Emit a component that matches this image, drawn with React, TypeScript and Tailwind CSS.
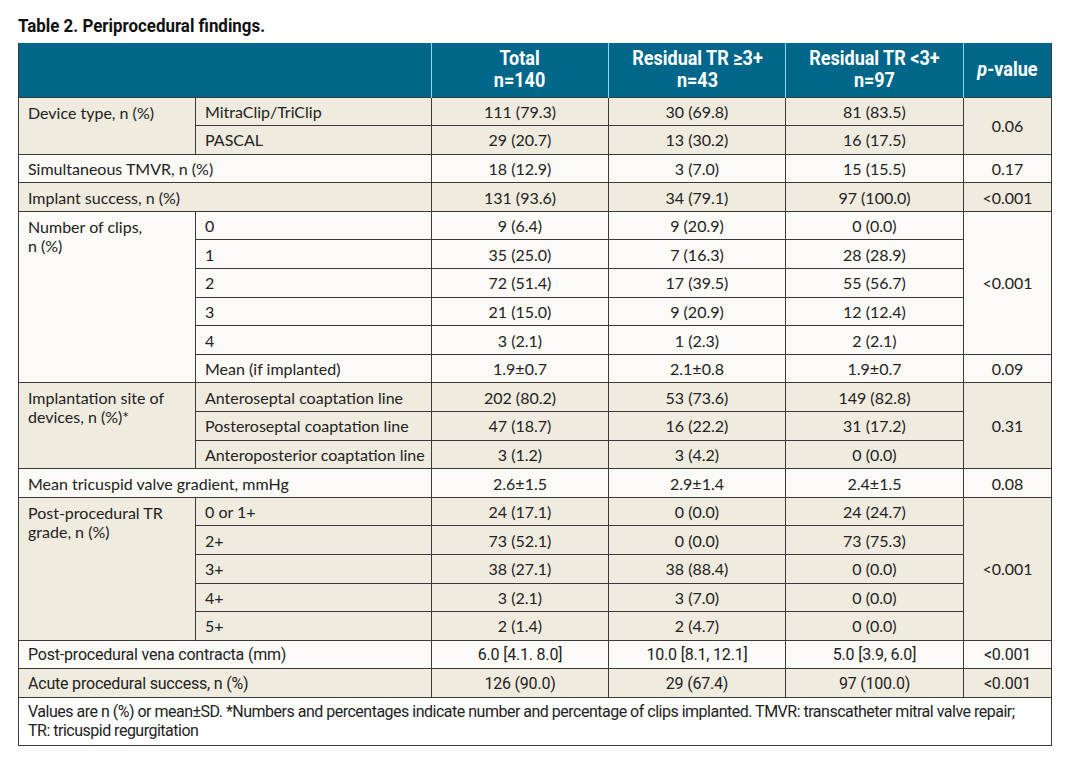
import React from "react"

const beige = "bg-[#f0ebdf]"
const white = "bg-[#fbfaf6]"
const cell =
  "border border-[#3a3a3a] px-[9px] h-[28.6px] text-[16px] leading-[19px] text-[#222] whitespace-nowrap font-['Lato',sans-serif]"
const num = cell + " text-center"
const narrow =
  "border border-[#3a3a3a] px-[9px] h-[28.6px] text-[16px] leading-[19px] text-[#222] whitespace-nowrap font-['Roboto',sans-serif] tracking-[-0.2px]"

type Row = { sub?: string; v: [string, string, string]; p?: string; pSpan?: number }

function Group({ label, rows, bg, span2 }: { label: React.ReactNode; rows: Row[]; bg: string; span2?: boolean }) {
  return (
    <>
      {rows.map((r, i) => (
        <tr key={i} className={bg}>
          {i === 0 && (
            <td
              className={cell + (span2 ? "" : " align-top pt-[5px] whitespace-normal")}
              rowSpan={span2 ? 1 : rows.length}
              colSpan={span2 ? 2 : 1}
            >
              {label}
            </td>
          )}
          {!span2 && <td className={cell}>{r.sub}</td>}
          {r.v.map((v, j) => (
            <td key={j} className={num}>
              {v}
            </td>
          ))}
          {r.p !== undefined && (
            <td className={num} rowSpan={r.pSpan ?? 1}>
              {r.p}
            </td>
          )}
        </tr>
      ))}
    </>
  )
}

function HeadText({ children }: { children: React.ReactNode }) {
  return (
    <span className="inline-block scale-x-[0.9] whitespace-nowrap font-['Roboto',sans-serif] font-bold text-[20px] leading-[22px]">
      {children}
    </span>
  )
}

export default function App() {
  return (
    <div className="w-[1069px] h-[760px] bg-white pl-[18px] pt-[14px]">
      <h1 className="mb-[7px] h-[22px]">
        <span className="inline-block origin-left scale-x-[0.89] whitespace-nowrap font-['Roboto',sans-serif] text-[19px] font-bold leading-[22px] text-[#111]">
          Table 2. Periprocedural findings.
        </span>
      </h1>
      <table className="border-collapse table-fixed w-[1033px]">
        <colgroup>
          <col className="w-[177px]" />
          <col className="w-[236px]" />
          <col className="w-[177px]" />
          <col className="w-[177px]" />
          <col className="w-[178px]" />
          <col className="w-[88px]" />
        </colgroup>
        <thead>
          <tr className="bg-[#01678a] text-white h-[54px]">
            <th colSpan={2} className="border-l border-l-[#3a3a3a] border-r border-r-[#8fd6ee]"></th>
            {[
              ["Total", "n=140"],
              ["Residual TR ≥3+", "n=43"],
              ["Residual TR <3+", "n=97"],
            ].map(([a, b]) => (
              <th key={a} className="border-r border-r-[#8fd6ee] text-center align-middle">
                <HeadText>
                  {a}
                  <br />
                  {b}
                </HeadText>
              </th>
            ))}
            <th className="border-r border-r-[#3a3a3a] text-center">
              <HeadText>
                <i>p</i>-value
              </HeadText>
            </th>
          </tr>
        </thead>
        <tbody>
          <Group
            label="Device type, n (%)"
            bg={beige}
            rows={[
              { sub: "MitraClip/TriClip", v: ["111 (79.3)", "30 (69.8)", "81 (83.5)"], p: "0.06", pSpan: 2 },
              { sub: "PASCAL", v: ["29 (20.7)", "13 (30.2)", "16 (17.5)"] },
            ]}
          />
          <Group
            label="Simultaneous TMVR, n (%)"
            bg={white}
            span2
            rows={[{ v: ["18 (12.9)", "3 (7.0)", "15 (15.5)"], p: "0.17" }]}
          />
          <Group
            label="Implant success, n (%)"
            bg={beige}
            span2
            rows={[{ v: ["131 (93.6)", "34 (79.1)", "97 (100.0)"], p: "<0.001" }]}
          />
          <Group
            label={
              <>
                Number of clips,
                <br />n (%)
              </>
            }
            bg={white}
            rows={[
              { sub: "0", v: ["9 (6.4)", "9 (20.9)", "0 (0.0)"], p: "<0.001", pSpan: 5 },
              { sub: "1", v: ["35 (25.0)", "7 (16.3)", "28 (28.9)"] },
              { sub: "2", v: ["72 (51.4)", "17 (39.5)", "55 (56.7)"] },
              { sub: "3", v: ["21 (15.0)", "9 (20.9)", "12 (12.4)"] },
              { sub: "4", v: ["3 (2.1)", "1 (2.3)", "2 (2.1)"] },
              { sub: "Mean (if implanted)", v: ["1.9±0.7", "2.1±0.8", "1.9±0.7"], p: "0.09" },
            ]}
          />
          <Group
            label={
              <>
                Implantation site of
                <br />
                devices, n (%)*
              </>
            }
            bg={beige}
            rows={[
              { sub: "Anteroseptal coaptation line", v: ["202 (80.2)", "53 (73.6)", "149 (82.8)"], p: "0.31", pSpan: 3 },
              { sub: "Posteroseptal coaptation line", v: ["47 (18.7)", "16 (22.2)", "31 (17.2)"] },
              { sub: "Anteroposterior coaptation line", v: ["3 (1.2)", "3 (4.2)", "0 (0.0)"] },
            ]}
          />
          <Group
            label="Mean tricuspid valve gradient, mmHg"
            bg={white}
            span2
            rows={[{ v: ["2.6±1.5", "2.9±1.4", "2.4±1.5"], p: "0.08" }]}
          />
          <Group
            label={
              <>
                Post-procedural TR
                <br />
                grade, n (%)
              </>
            }
            bg={beige}
            rows={[
              { sub: "0 or 1+", v: ["24 (17.1)", "0 (0.0)", "24 (24.7)"], p: "<0.001", pSpan: 5 },
              { sub: "2+", v: ["73 (52.1)", "0 (0.0)", "73 (75.3)"] },
              { sub: "3+", v: ["38 (27.1)", "38 (88.4)", "0 (0.0)"] },
              { sub: "4+", v: ["3 (2.1)", "3 (7.0)", "0 (0.0)"] },
              { sub: "5+", v: ["2 (1.4)", "2 (4.7)", "0 (0.0)"] },
            ]}
          />
          <tr className={white}>
            <td colSpan={2} className={narrow}>
              Post-procedural vena contracta (mm)
            </td>
            <td className={narrow + " text-center"}>6.0 [4.1. 8.0]</td>
            <td className={narrow + " text-center"}>10.0 [8.1, 12.1]</td>
            <td className={narrow + " text-center"}>5.0 [3.9, 6.0]</td>
            <td className={narrow + " text-center"}>&lt;0.001</td>
          </tr>
          <tr className={beige}>
            <td colSpan={2} className={narrow}>
              Acute procedural success, n (%)
            </td>
            <td className={narrow + " text-center"}>126 (90.0)</td>
            <td className={narrow + " text-center"}>29 (67.4)</td>
            <td className={narrow + " text-center"}>97 (100.0)</td>
            <td className={narrow + " text-center"}>&lt;0.001</td>
          </tr>
          <tr className="bg-white">
            <td
              colSpan={6}
              className="border border-[#3a3a3a] px-[9px] pt-[4px] pb-[5px] h-[46px] align-top text-[16px] leading-[19px] tracking-[-0.5px] text-[#222] font-['Roboto',sans-serif]"
            >
              <span className="whitespace-nowrap">
                Values are n (%) or mean±SD. *Numbers and percentages indicate number and percentage of clips implanted.
                TMVR: transcatheter mitral valve repair;
              </span>
              <br />
              TR: tricuspid regurgitation
            </td>
          </tr>
        </tbody>
      </table>
    </div>
  )
}
